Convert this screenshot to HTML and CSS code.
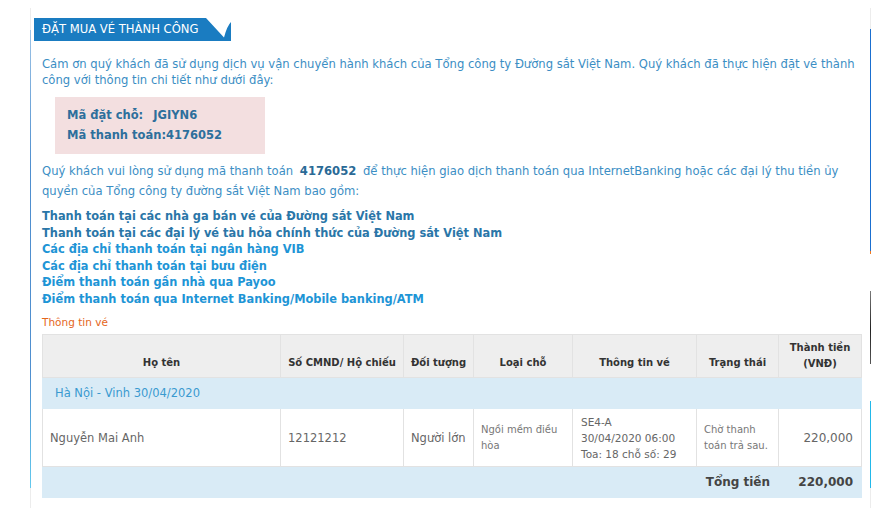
FILE: index.html
```html
<!DOCTYPE html>
<html lang="vi">
<head>
<meta charset="utf-8">
<title>Đặt mua vé thành công</title>
<link rel="stylesheet" href="styles.css">
</head>
<body>
<div class="panel">
  <span class="edge edge-left"></span>
  <span class="edge edge-right"></span>
  <div class="title">
    <span class="title-text">ĐẶT MUA VÉ THÀNH CÔNG</span>
    <svg class="swoosh" width="28" height="23" viewBox="0 0 28 23">
      <path d="M3 0 L21 19.5 Q24 8 28 4 L28 0 Z" fill="#ffffff"/>
    </svg>
  </div>
  <p class="intro">Cám ơn quý khách đã sử dụng dịch vụ vận chuyển hành khách của Tổng công ty Đường sắt Việt Nam. Quý khách đã thực hiện đặt vé thành công với thông tin chi tiết như dưới đây:</p>
  <div class="codes">
    <div class="code-line">Mã đặt chỗ:<span class="gap"></span>JGIYN6</div>
    <div class="code-line">Mã thanh toán:4176052</div>
  </div>
  <p class="pay">Quý khách vui lòng sử dụng mã thanh toán <b class="paycode">4176052</b> để thực hiện giao dịch thanh toán qua InternetBanking hoặc các đại lý thu tiền ủy quyền của Tổng công ty đường sắt Việt Nam bao gồm:</p>
  <ul class="links">
    <li class="link dark">Thanh toán tại các nhà ga bán vé của Đường sắt Việt Nam</li>
    <li class="link dark">Thanh toán tại các đại lý vé tàu hỏa chính thức của Đường sắt Việt Nam</li>
    <li class="link">Các địa chỉ thanh toán tại ngân hàng VIB</li>
    <li class="link">Các địa chỉ thanh toán tại bưu điện</li>
    <li class="link">Điểm thanh toán gần nhà qua Payoo</li>
    <li class="link">Điểm thanh toán qua Internet Banking/Mobile banking/ATM</li>
  </ul>
  <div class="section-label">Thông tin vé</div>
  <table class="tickets">
    <colgroup>
      <col class="c1"><col class="c2"><col class="c3"><col class="c4"><col class="c5"><col class="c6"><col class="c7">
    </colgroup>
    <thead>
      <tr class="head">
        <th>Họ tên</th>
        <th>Số CMND/ Hộ chiếu</th>
        <th>Đối tượng</th>
        <th>Loại chỗ</th>
        <th>Thông tin vé</th>
        <th>Trạng thái</th>
        <th class="th-money">Thành tiền<br>(VNĐ)</th>
      </tr>
    </thead>
    <tbody>
      <tr class="route"><td colspan="7">Hà Nội - Vinh 30/04/2020</td></tr>
      <tr class="data">
        <td class="name">Nguyễn Mai Anh</td>
        <td class="name">12121212</td>
        <td class="name">Người lớn</td>
        <td class="small">Ngồi mềm điều hòa</td>
        <td class="info">SE4-A<br>30/04/2020 06:00<br>Toa: 18 chỗ số: 29</td>
        <td class="small">Chờ thanh toán trả sau.</td>
        <td class="money">220,000</td>
      </tr>
      <tr class="total">
        <td colspan="6" class="total-label">Tổng tiền</td>
        <td class="total-money">220,000</td>
      </tr>
    </tbody>
  </table>
</div>
</body>
</html>
```
FILE: styles.css
```css
html, body {
  margin: 0;
  padding: 0;
  background: #ffffff;
}
body {
  font-family: "DejaVu Sans", Verdana, sans-serif;
  width: 893px;
  height: 517px;
  overflow: hidden;
}
.panel {
  position: relative;
  margin: 8px 0 0 30px;
  width: 841px;
  height: 500px;
  box-sizing: border-box;
  border-left: 1px solid #ececec;
  border-right: 1px solid #ececec;
  padding: 10px 12px 0 11px;
}
.edge {
  position: absolute;
  width: 1px;
}
.edge-left {
  left: -1px;
  top: 22px;
  height: 458px;
  background: linear-gradient(#9cc3e6, #4f8fcf 30%, #4f8fcf 75%, #63c9ee);
}
.edge-right {
  right: -1px;
  top: 21px;
  height: 459px;
  background: linear-gradient(#1a6fd0 0, #1a6fd0 222px, #f07a22 222px, #f07a22 225px, #ffffff 225px, #ffffff 262px, #7a7a7a 262px, #222 300px, #555 335px, #ffffff 335px, #ffffff 372px, #22b8ea 372px, #22b8ea 459px);
}
.title {
  position: relative;
  margin-left: -8px;
  width: 197px;
  height: 23px;
  background: #1a7cc1;
  color: #ffffff;
  font-size: 11.6px;
  line-height: 23px;
  padding-left: 8px;
  box-sizing: border-box;
  white-space: nowrap;
}
.swoosh {
  position: absolute;
  right: 0;
  top: 0;
}
.intro {
  margin: 15px 0 0;
  font-size: 11.6px;
  line-height: 16px;
  color: #3b8ec4;
}
.codes {
  margin: 9px 0 0 13px;
  width: 210px;
  height: 57px;
  box-sizing: border-box;
  background: #f3dfe0;
  padding: 8px 0 0 12px;
}
.code-line {
  font-size: 11.5px;
  font-weight: bold;
  line-height: 20px;
  color: #2d6f9c;
}
.gap {
  display: inline-block;
  width: 10px;
}
.pay {
  margin: 7px 0 0;
  font-size: 11.6px;
  line-height: 20px;
  color: #3b8ec4;
}
.paycode {
  color: #2a6a96;
  margin: 0 3px;
}
.links {
  list-style: none;
  margin: 7px 0 0;
  padding: 0;
}
.link {
  font-size: 11.4px;
  font-weight: bold;
  line-height: 16.5px;
  color: #1e95d6;
}
.link.dark {
  color: #2a76a8;
}
.section-label {
  margin-top: 8px;
  font-size: 10.5px;
  line-height: 14px;
  color: #e5661b;
}
.tickets {
  margin-top: 5px;
  width: 819px;
  border-collapse: collapse;
  table-layout: fixed;
}
.c1 { width: 238px; }
.c2 { width: 123px; }
.c3 { width: 70px; }
.c4 { width: 99px; }
.c5 { width: 124px; }
.c6 { width: 82px; }
.c7 { width: 83px; }
.tickets th,
.tickets td {
  border: 1px solid #e2e2e2;
  padding: 0 7px;
}
.head th {
  height: 43px;
  box-sizing: border-box;
  background: #eeeeee;
  color: #333333;
  font-size: 10px;
  font-weight: bold;
  line-height: 16px;
  text-align: center;
  vertical-align: bottom;
  padding: 0 2px 6px;
  white-space: nowrap;
}
.head .th-money {
  vertical-align: middle;
  padding-bottom: 0;
}
.route td {
  height: 31px;
  box-sizing: border-box;
  background: #d9ebf6;
  border-color: #d9ebf6;
  color: #3a9ad0;
  font-size: 11.5px;
  padding-left: 12px;
}
.data td {
  height: 58px;
  box-sizing: border-box;
  background: #ffffff;
  color: #666666;
  vertical-align: middle;
}
.data .name {
  font-size: 11.5px;
}
.data .small {
  font-size: 10px;
  line-height: 16px;
  color: #777777;
}
.data .info {
  font-size: 10.5px;
  line-height: 16px;
  padding-left: 8px;
}
.data .money {
  font-size: 12px;
  text-align: right;
  padding-right: 8px;
}
.total td {
  height: 31px;
  box-sizing: border-box;
  background: #d9ebf6;
  border-color: #d9ebf6;
  color: #444444;
  font-size: 12px;
  font-weight: bold;
  text-align: right;
  padding-right: 8px;
}
.total .total-money {
  border-left-color: #e6f1f8;
}
```
